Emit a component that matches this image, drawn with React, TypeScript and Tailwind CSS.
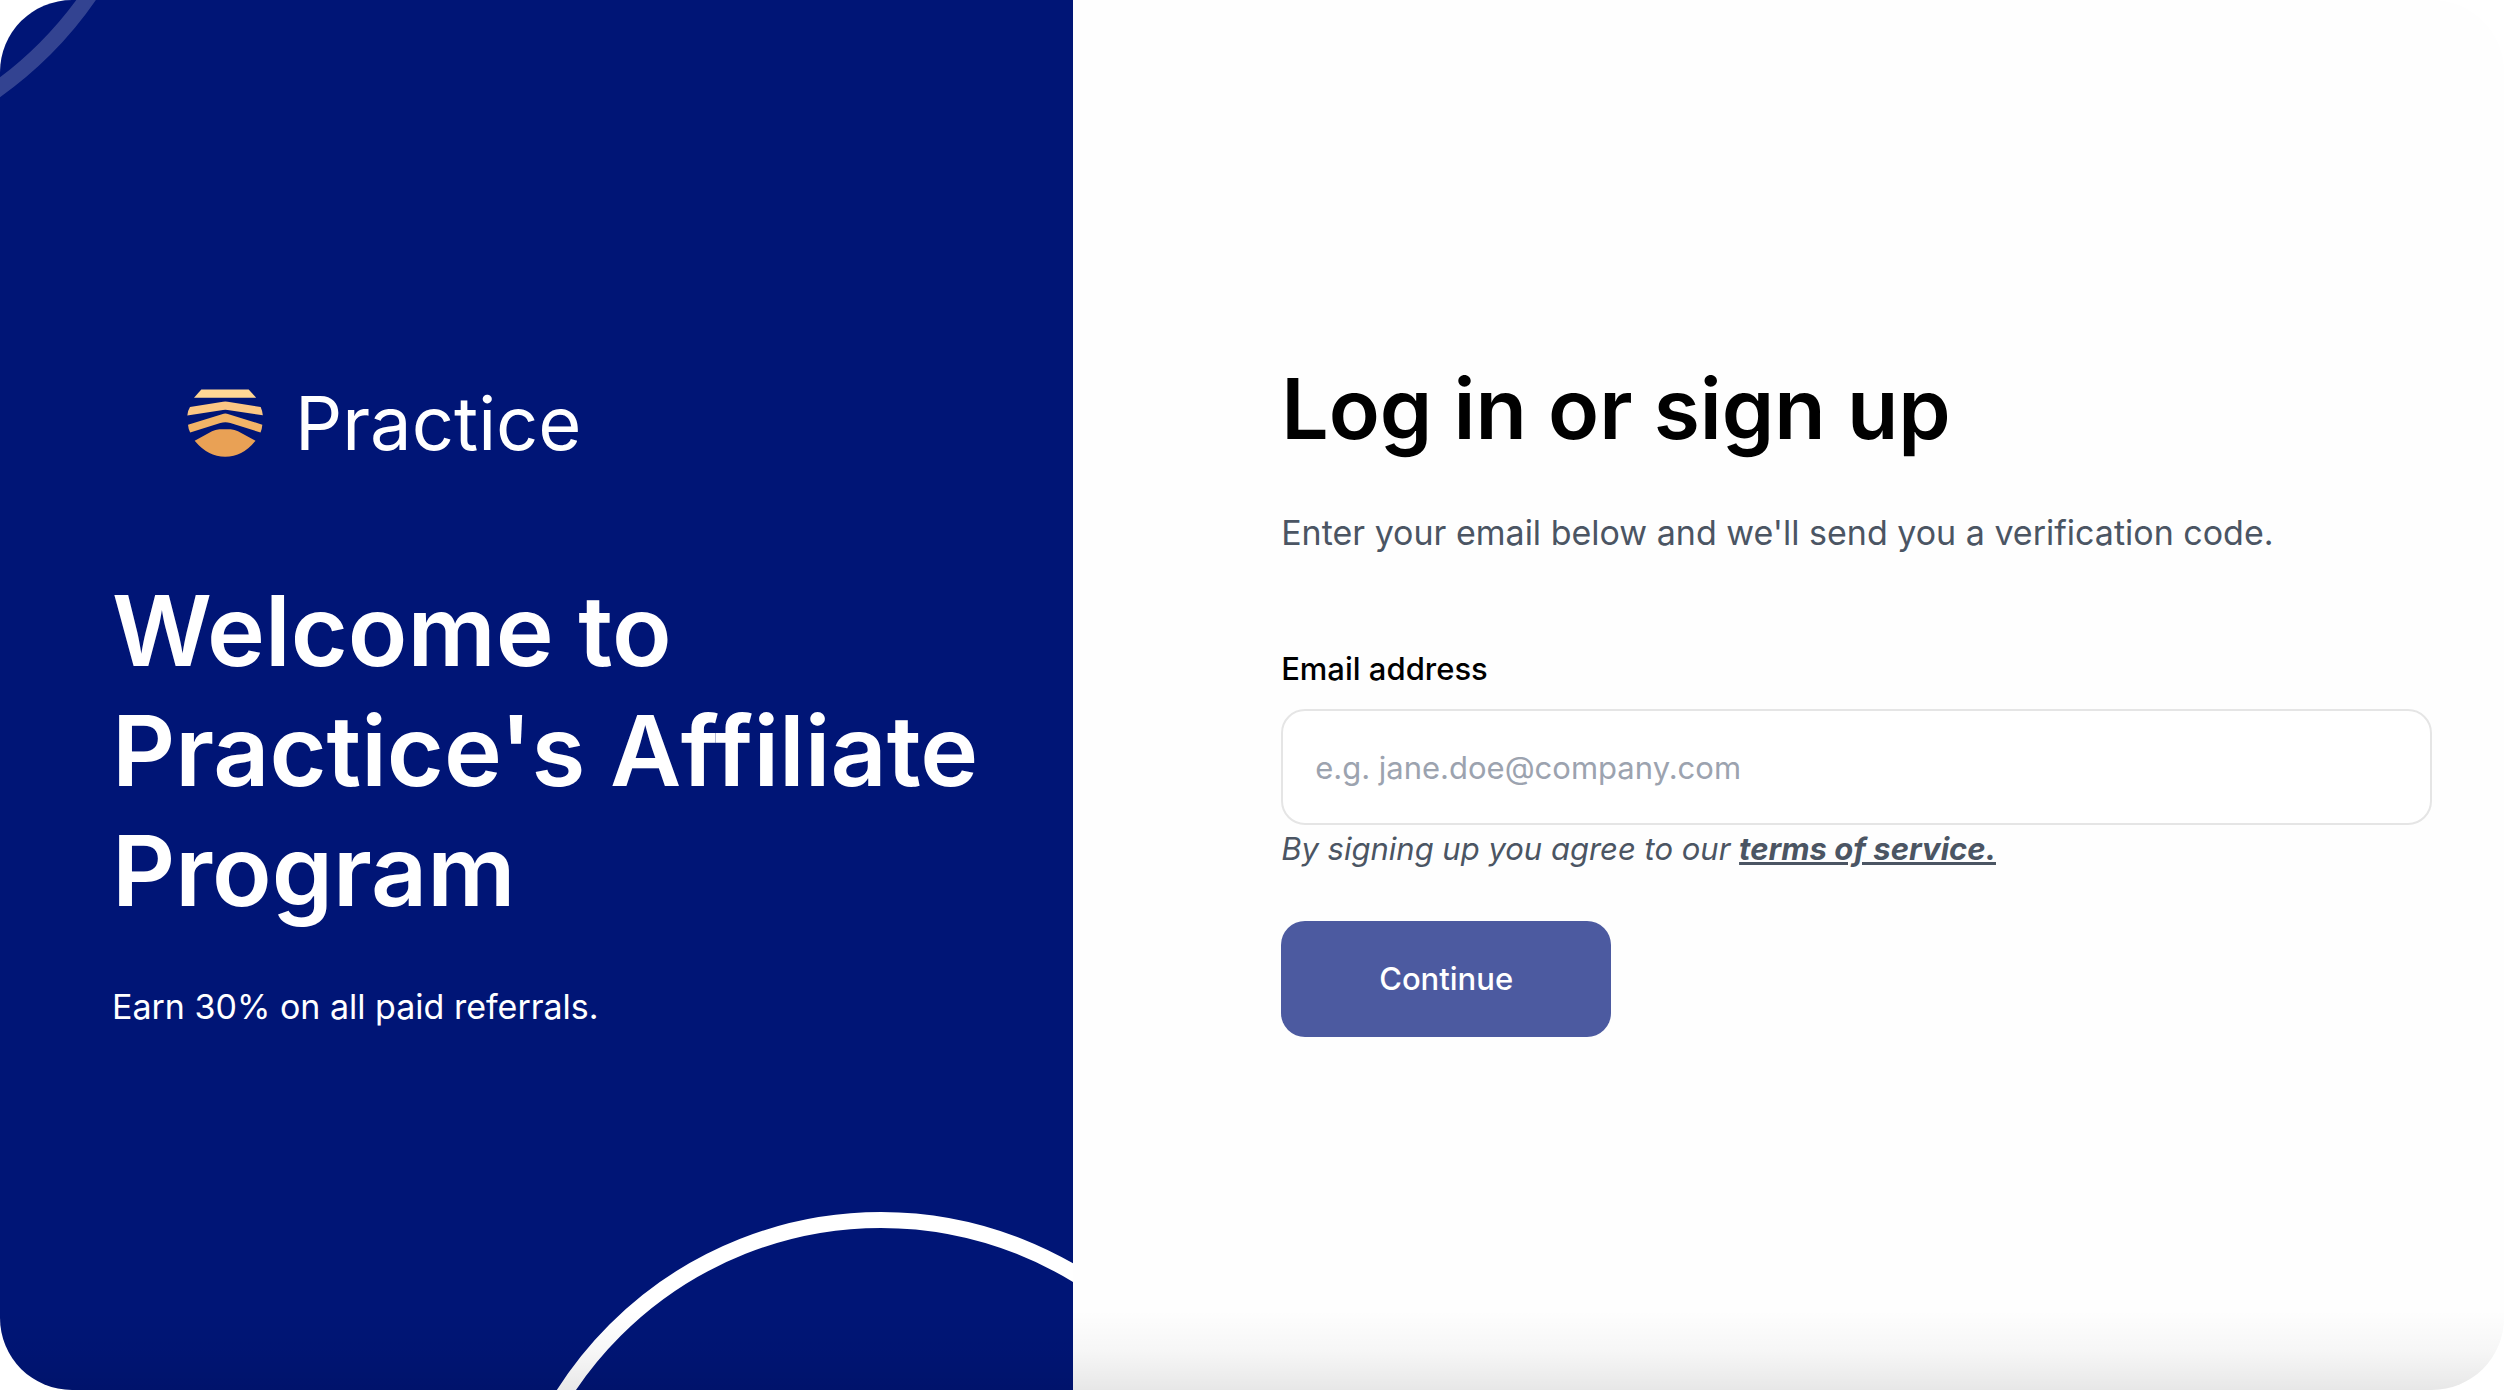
import { useState } from 'react';
import type { FormEvent } from 'react';

function PracticeMark() {
  return (
    <svg viewBox="81 88 228 204" className="h-[68px] w-[76px]" aria-hidden="true">
      <path d="M124 89.5H266L288.500 114H102Z" fill="#ffd795" />
      <path
        d="M90 142L189 126Q196 125 203 126L302 142Q307 153 308.500 167L203 151Q196 150 189 151L82 167.500Q83 153 90 142Z"
        fill="#fbc784"
      />
      <path
        d="M84 195L186 163.500Q196 160 206 163.500L307 195Q306 208 301.500 218.500L211 190Q196 186 181 190L90.500 218.500Q85 208 84 195Z"
        fill="#f2b467"
      />
      <path
        d="M104 243.500L156 215Q166 209 178 208.500H212Q224 209 234 215L286.500 243.500Q248 291.500 195.500 291.500Q144 291.500 104 243.500Z"
        fill="#e9a155"
      />
    </svg>
  );
}

function WelcomePanel() {
  return (
    <section className="relative col-span-3 flex flex-col justify-center overflow-hidden bg-[#001576] pl-28 text-white">
      {/* decorative rings */}
      <div className="absolute -top-[601px] -left-[605px] size-[768px] rounded-full border-16 border-white/20" />
      <div className="absolute -right-48 -bottom-[590px] size-[768px] rounded-full border-16 border-white" />

      <div className="flex h-[136px] items-center gap-8 pl-[75px]">
        <PracticeMark />
        <span className="text-[74px] leading-none">Practice</span>
      </div>
      <h1 className="mt-20 text-[98px] leading-[120px] font-semibold">
        Welcome to
        <br />
        Practice's Affiliate
        <br />
        Program
      </h1>
      <p className="mt-12 text-[34px] leading-14">Earn 30% on all paid referrals.</p>
    </section>
  );
}

function LoginForm() {
  const [email, setEmail] = useState('');

  const handleSubmit = (e: FormEvent) => {
    e.preventDefault();
  };

  return (
    <section className="col-span-4 flex flex-col justify-center pt-2 pr-[72px] pl-52">
      <h2 className="text-[84px] leading-24 font-semibold text-black">Log in or sign up</h2>
      <p className="mt-12 text-[34px] leading-14 text-[#4b5563]">
        Enter your email below and we'll send you a verification code.
      </p>

      <form onSubmit={handleSubmit} className="mt-22 flex flex-col items-start">
        <label htmlFor="email" className="text-[31px] leading-10 font-medium text-black">
          Email address
        </label>
        <input
          id="email"
          type="email"
          value={email}
          onChange={(e) => setEmail(e.target.value)}
          placeholder="e.g. jane.doe@company.com"
          className="mt-5 h-29 w-full rounded-3xl border-2 border-[#e5e5e5] bg-white px-8 text-[31px] text-black outline-none placeholder:text-[#9ca3af]"
        />
        <p className="text-[31px] leading-12 text-[#4b5563] italic">
          By signing up you agree to our{' '}
          <a href="#terms" className="font-bold underline">
            terms of service.
          </a>
        </p>
        <button
          type="submit"
          className="mt-12 h-29 w-[330px] rounded-3xl bg-[#4c5aa0] text-[31px] font-medium text-white"
        >
          Continue
        </button>
      </form>
    </section>
  );
}

export default function App() {
  return (
    <main className="relative grid min-h-screen grid-cols-7 overflow-hidden rounded-[72px] bg-[#fefefe] font-['Inter',sans-serif]">
      <WelcomePanel />
      <LoginForm />
      <div className="pointer-events-none absolute inset-x-0 bottom-0 h-20 bg-linear-to-t from-black/9 via-black/3 to-transparent" />
    </main>
  );
}
